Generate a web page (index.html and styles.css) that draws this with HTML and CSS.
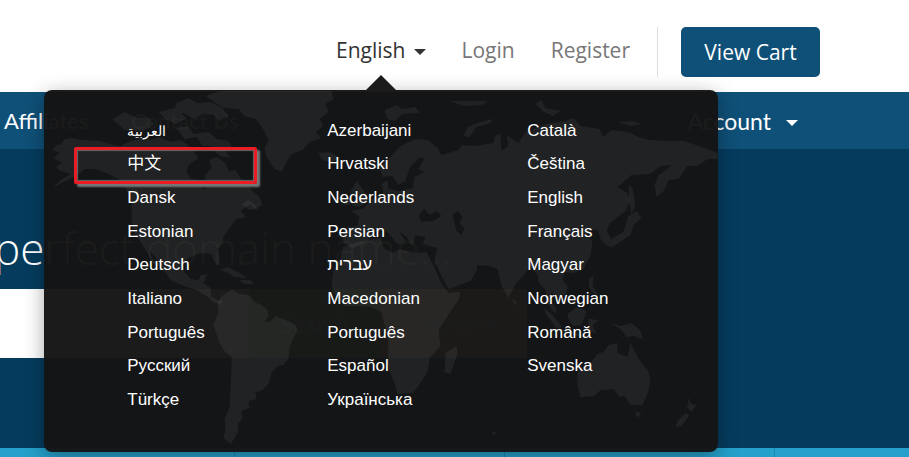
FILE: index.html
```html
<!DOCTYPE html>
<html lang="en">
<head>
<meta charset="utf-8">
<title>Choose language</title>
<link rel="stylesheet" href="styles.css">
</head>
<body>
<header class="topbar">
  <div class="language">
    <button class="language-toggle" type="button" aria-expanded="true">English <span class="caret"></span></button>
    <div class="language-panel">
      <svg class="map" viewBox="44 90 673 362" aria-hidden="true">
        <!-- Americas and Greenland -->
        <path d="M52 150L55 146L61 144L64 139L71 138L82 140L100 141L112 145L120 146L128 142L140 138L150 140L158 137L170 142L179 140L185 143L192 150L198 158L188 165L186 172L190 178L200 182L202 188L205 190L206 183L204 176L211 168L209 160L216 157L225 163L228 171L235 170L240 178L247 184L251 190L259 197L262 205L254 209L250 204L240 211L246 217L236 219L227 231L223 237L222 243L217 249L219 260L218 266L214 262L211 254L200 253L190 257L183 262L184 272L190 279L198 280L200 275L207 274L203 283L210 288L211 297L217 300L222 301L220 304L214 303L206 296L196 290L183 286L170 280L162 268L154 256L149 250L151 257L158 265L155 266L147 253L141 243L134 234L131 222L131 200L126 190L120 180L108 174L95 169L84 169L76 176L63 182L52 188L60 180L70 174L58 170L56 166L62 163L53 158L59 153Z"/>
        <path d="M213 325L218 312L217 304L220 297L227 292L232 290L239 294L248 295L254 302L261 305L267 310L268 316L264 322L270 321L275 316L285 320L294 324L297 330L292 340L289 347L288 358L283 365L277 366L271 373L268 384L261 391L255 392L256 399L248 401L249 408L241 411L242 419L237 424L238 431L233 440L230 444L223 438L225 428L224 419L229 407L231 370L231 357L224 351L219 343Z"/>
        <path d="M205 96L220 91L331 91L333 99L325 104L328 112L319 119L323 126L315 132L321 138L309 142L302 150L291 154L286 162L281 172L274 169L266 157L264 148L268 140L262 128L255 119L244 116L238 109L223 108Z"/>
        <path d="M176 103L188 98L197 103L210 102L222 108L228 116L218 121L214 115L202 114L194 119L183 113L172 115ZM112 119L124 112L136 118L147 117L154 124L142 132L124 130ZM158 112L174 108L186 118L176 124L165 119ZM176 128L188 126L193 134L208 132L216 139L228 141L233 150L225 151L230 158L219 156L210 146L202 146L196 137L184 139ZM241 204L248 200L253 204L258 209L249 210ZM219 270L227 267L239 273L247 278L234 277L226 272ZM239 280L250 280L253 284L243 284ZM318 153L329 152L338 157L333 162L324 161L320 158Z"/>
        <!-- Africa -->
        <path d="M343 247L358 242L380 238L383 248L393 253L400 249L412 253L426 252L430 260L435 270L441 284L448 293L460 292L458 300L449 313L438 330L440 346L429 358L427 372L418 386L412 393L397 394L394 383L387 366L388 343L385 329L381 312L371 307L360 306L344 306L334 294L331 284L333 270L340 259ZM445 353L456 346L457 353L450 374L444 372Z"/>
        <!-- Europe and Asia -->
        <path fill-rule="evenodd" d="M343 243L342 228L357 226L359 216L350 211L362 209L373 198L383 194L381 184L387 180L388 189L399 191L412 188L414 177L424 172L418 169L424 158L418 158L409 168L405 181L398 185L392 176L382 177L379 166L388 159L400 146L415 139L427 140L437 148L441 155L458 150L462 145L475 146L493 143L495 135L500 134L501 151L508 146L506 135L518 143L525 132L546 124L564 121L573 118L580 126L599 129L603 137L611 130L628 132L638 137L649 140L667 141L684 141L701 147L717 153L717 159L707 159L697 166L687 166L678 179L668 180L664 190L656 197L654 185L658 175L667 169L671 165L660 166L650 174L631 175L617 187L627 193L630 200L625 211L616 218L610 223L606 230L611 239L607 246L600 239L598 231L590 229L586 235L592 241L590 255L583 269L573 273L564 272L562 280L567 286L566 294L557 299L551 292L550 300L556 309L554 313L547 303L545 290L538 282L537 275L529 266L523 276L515 284L508 298L501 286L497 269L488 266L477 265L476 271L470 281L448 289L441 276L434 260L437 248L422 244L425 237L415 235L412 246L406 237L398 231L394 225L405 241L398 245L386 231L375 231L366 242L352 248ZM421 222L433 221L441 216L436 211L429 215L424 209L418 216ZM452 214L458 211L462 218L459 223L464 229L461 235L456 231Z"/>
        <path d="M350 192L356 181L363 190L368 202L358 207L351 205L357 198ZM345 199L351 198L349 205L343 205ZM463 136L467 127L480 122L492 119L490 123L476 127L469 137ZM628 185L632 188L635 205L631 214L629 203ZM628 216L636 211L641 218L633 225L630 235L621 241L612 247L607 246L612 238L623 232ZM384 110L397 105L401 109L415 107L419 113L402 114L394 121L387 119ZM449 101L487 101L481 105L464 106ZM535 104L541 100L545 108L560 111L552 116L542 111ZM618 122L632 121L642 124L630 126Z"/>
        <!-- Islands and Oceania -->
        <path d="M543 308L551 314L562 327L556 328L546 315ZM567 314L577 307L586 311L581 325L573 326L568 320ZM588 319L598 320L592 325L596 334L590 331L588 338ZM610 323L621 326L631 323L640 331L643 340L634 336L626 337L620 329ZM589 278L593 276L592 286L598 295L592 293L588 286ZM560 329L577 333L582 337L566 334ZM577 373L582 367L590 363L597 354L603 352L608 345L617 343L617 353L627 357L630 343L637 357L641 363L647 370L650 378L648 391L642 405L630 405L624 396L619 397L613 389L600 390L594 396L580 397L577 386ZM634 412L641 413L637 418ZM687 397L691 404L696 405L691 412L686 407L688 404ZM685 413L689 415L681 426L675 427L677 421ZM512 298L516 302L514 306ZM491 431L496 433L493 436Z"/>
      </svg>
      <ul class="language-list">
        <li><a href="#" lang="ar">العربية</a></li>
        <li><a href="#">Azerbaijani</a></li>
        <li><a href="#">Català</a></li>
        <li class="highlight"><a href="#" lang="zh">中文</a></li>
        <li><a href="#">Hrvatski</a></li>
        <li><a href="#">Čeština</a></li>
        <li><a href="#">Dansk</a></li>
        <li><a href="#">Nederlands</a></li>
        <li><a href="#">English</a></li>
        <li><a href="#">Estonian</a></li>
        <li><a href="#">Persian</a></li>
        <li><a href="#">Français</a></li>
        <li><a href="#">Deutsch</a></li>
        <li><a href="#" lang="he">עברית</a></li>
        <li><a href="#">Magyar</a></li>
        <li><a href="#">Italiano</a></li>
        <li><a href="#">Macedonian</a></li>
        <li><a href="#">Norwegian</a></li>
        <li><a href="#">Português</a></li>
        <li><a href="#">Português</a></li>
        <li><a href="#">Română</a></li>
        <li><a href="#">Русский</a></li>
        <li><a href="#">Español</a></li>
        <li><a href="#">Svenska</a></li>
        <li><a href="#">Türkçe</a></li>
        <li><a href="#">Українська</a></li>
      </ul>
    </div>
  </div>
  <a class="top-link" href="#">Login</a>
  <a class="top-link" href="#">Register</a>
  <div class="cart"><button class="cart-button" type="button">View Cart</button></div>
</header>
<nav class="mainnav">
  <a href="#">Affiliates</a>
  <a href="#">Contact Us</a>
  <a class="account" href="#">Account <span class="caret"></span></a>
</nav>
<main class="hero">
  <h1>perfect domain name...</h1>
  <form class="search">
    <input type="text" aria-label="Domain name">
    <button class="search-button" type="button">Search</button>
    <button class="transfer-button" type="button">Transfer</button>
  </form>
</main>
<div class="tiles"><span></span><span></span><span></span><span></span></div>
</body>
</html>
```

FILE: styles.css
```css
* { box-sizing: border-box; }

body {
  margin: 0;
  min-height: 100vh;
  display: flex;
  flex-direction: column;
  overflow: hidden;
  background: #053c5e;
  color: #fff;
  font-family: Lato, sans-serif;
}

a { color: inherit; text-decoration: none; }

button { border: 0; padding: 0; font: inherit; color: inherit; cursor: pointer; }

.topbar {
  display: flex;
  align-items: center;
  justify-content: flex-end;
  gap: 36px;
  height: 92px;
  padding: 12px 89px 0 0;
  background: #fff;
  color: #777;
  font-family: "Open Sans", sans-serif;
  font-size: 21px;
  line-height: 28px;
}

.language { position: relative; margin-right: -1px; }

.top-link, .language-toggle { padding-bottom: 4px; }

.language-toggle {
  display: flex;
  align-items: center;
  gap: 9px;
  background: none;
  color: #333;
}

.caret {
  border: 6px solid transparent;
  border-top-color: currentColor;
  border-bottom: 0;
}

.language-toggle .caret { margin-top: 4px; }

.cart {
  padding-left: 23px;
  margin-left: -9px;
  border-left: 1px solid #ddd;
}

.cart-button {
  min-width: 139px;
  padding: 11px 0;
  border-radius: 5px;
  background: #0f5078;
  color: #fff;
}

.language-panel {
  position: absolute;
  z-index: 2;
  top: 54px;
  left: 50%;
  width: 674px;
  transform: translateX(-50%);
  border-radius: 8px;
  background: rgba(20, 20, 20, .97);
  box-shadow: 0 5px 20px rgba(0, 0, 0, .35);
  color: #fff;
  font-family: "Liberation Sans", "Noto Sans CJK SC", sans-serif;
  font-size: 17px;
  line-height: 20px;
}

.language-panel::before {
  content: "";
  position: absolute;
  left: 50%;
  bottom: 100%;
  transform: translateX(-50%);
  border: 15px solid transparent;
  border-top: 0;
  border-bottom-color: #1b1b1b;
}

.map {
  position: absolute;
  inset: 0;
  width: 100%;
  height: 100%;
  fill: rgba(255, 255, 255, .06);
}

.language-list {
  position: relative;
  display: grid;
  grid-template-columns: repeat(3, 200px);
  grid-template-rows: repeat(9, 1fr);
  min-height: 362px;
  margin: 0;
  padding: 24px 0 35px 83px;
  list-style: none;
}

.language-list li { display: flex; align-items: center; }

.language-list [lang="ar"] { font-size: 14px; }

.highlight { position: relative; }

.highlight::before {
  content: "";
  position: absolute;
  inset: -1px 70px -3px -53px;
  border: 3px solid #ec1c24;
  border-radius: 2px;
  box-shadow: 3px 3px 2px #777, inset 0 0 1px 1px #666;
}

.highlight a { position: relative; }

.mainnav {
  display: flex;
  align-items: center;
  gap: 43px;
  height: 57px;
  padding: 0 111px 0 4px;
  background: #0f5078;
  font-size: 22px;
}

.account {
  display: flex;
  align-items: center;
  gap: 15px;
  margin-left: auto;
  font-size: 23px;
}

.account .caret { margin-top: 4px; }

.hero { flex: 1; }

.hero h1 {
  margin: 0;
  padding: 69px 0 11px;
  font-family: "Open Sans", sans-serif;
  font-size: 44px;
  line-height: 60px;
  font-weight: 300;
  text-indent: -6px;
}

.search {
  display: flex;
  width: 527px;
  height: 69px;
}

.search input { flex: 1; min-width: 0; border: 0; background: #fff; }

.search button { font-size: 24px; }

.search-button { width: 131px; background: #8cc98c; }

.transfer-button { width: 147px; background: #f0ce9c; }

.tiles {
  display: grid;
  grid-template-columns: 234px 270px 270px 1fr;
  height: 9px;
  background: #25a0ca;
}

.tiles span + span { border-left: 1px solid #1687b0; }
```
